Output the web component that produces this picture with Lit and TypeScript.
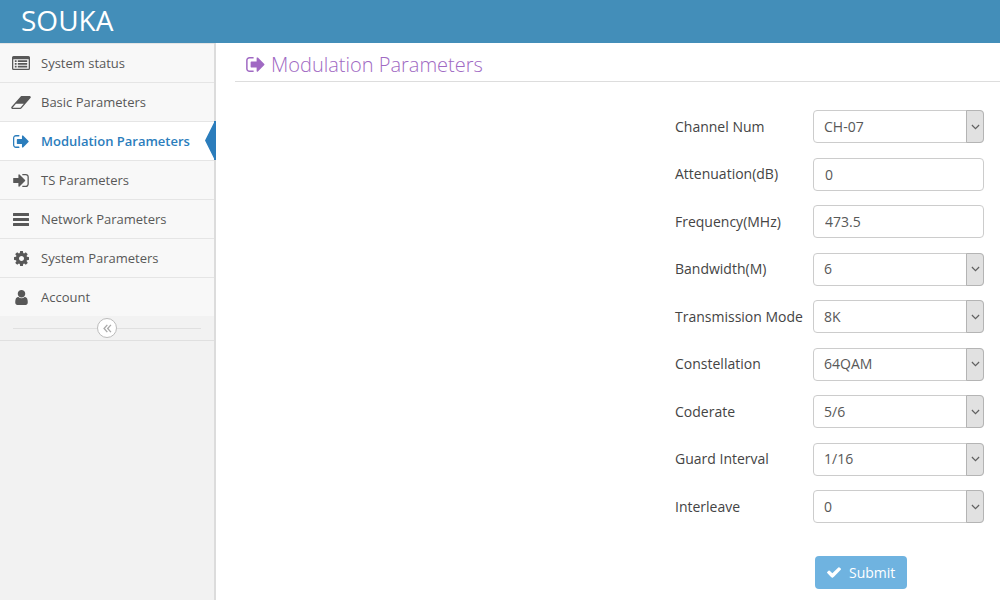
import { LitElement, html, css, svg, nothing } from "lit";
import { customElement, property, state } from "lit/decorators.js";

const glyphs: Record<string, { box: string; body: unknown }> = {
  list: {
    box: "0 0 18 14",
    body: svg`<path fill-rule="evenodd" d="M1.500 0h15A1.500 1.500 0 0 1 18 1.500v11A1.500 1.500 0 0 1 16.500 14h-15A1.500 1.500 0 0 1 0 12.500v-11A1.500 1.500 0 0 1 1.500 0zM1.300 3.200v9.500h15.400V3.200zM2.800 4.200h1.800v1.700H2.800zM5.800 4.200h9.400v1.700H5.800zM2.800 7h1.800v1.700H2.800zM5.800 7h9.400v1.700H5.800zM2.800 9.800h1.800v1.700H2.800zM5.800 9.800h9.400v1.700H5.800z"/>`,
  },
  eraser: {
    box: "-66 260 1922 1276",
    body: svg`<path d="M832 1408l336-384h-768l-336 384h768zm1013-1077q15 34 9.500 71.500t-30.500 65.500l-896 1024q-38 44-96 44h-768q-38 0-69.500-20.500t-47.500-54.500q-15-34-9.500-71.500t30.500-65.500l896-1024q38-44 96-44h768q38 0 69.500 20.500t47.500 54.500z"/>`,
  },
  signOut: {
    box: "64 256 1600 1280",
    body: svg`<path d="M704 1440q0 4 1 20t.5 26.500-3 23.500-10 19.500-20.500 6.500h-320q-119 0-203.500-84.500t-84.500-203.500v-704q0-119 84.500-203.500t203.500-84.500h320q13 0 22.500 9.500t9.500 22.500q0 4 1 20t.5 26.500-3 23.500-10 19.500-20.500 6.500h-320q-66 0-113 47t-47 113v704q0 66 47 113t113 47h312l11.500 1 11.500 3 8 5.500 7 9 2 13.500zm928-544q0 26-19 45l-544 544q-19 19-45 19t-45-19-19-45v-288h-448q-26 0-45-19t-19-45v-384q0-26 19-45t45-19h448v-288q0-26 19-45t45-19 45 19l544 544q19 19 19 45z"/>`,
  },
  signIn: {
    box: "0 256 1536 1280",
    body: svg`<path d="M1184 896q0 26-19 45l-544 544q-19 19-45 19t-45-19-19-45v-288h-448q-26 0-45-19t-19-45v-384q0-26 19-45t45-19h448v-288q0-26 19-45t45-19 45 19l544 544q19 19 19 45zm352-352v704q0 119-84.500 203.500t-203.500 84.500h-320q-13 0-22.500-9.500t-9.500-22.500q0-4-1-20t-.5-26.500 3-23.500 10-19.500 20.500-6.500h320q66 0 113-47t47-113v-704q0-66-47-113t-113-47h-312l-11.500-1-11.500-3-8-5.500-7-9-2-13.500q0-4-1-20t-.5-26.500 3-23.500 10-19.500 20.500-6.500h320q119 0 203.500 84.500t84.500 203.500z"/>`,
  },
  bars: {
    box: "0 0 16 13",
    body: svg`<path d="M.5 0h15a.5.5 0 0 1 .5.5v2a.5.5 0 0 1-.5.5H.5A.5.5 0 0 1 0 2.500v-2A.5.5 0 0 1 .5 0zM.5 5h15a.5.5 0 0 1 .5.5v2a.5.5 0 0 1-.5.5H.5a.5.5 0 0 1-.5-.5v-2A.5.5 0 0 1 .5 5zM.5 10h15a.5.5 0 0 1 .5.5v2a.5.5 0 0 1-.5.5H.5a.5.5 0 0 1-.5-.5v-2a.5.5 0 0 1 .5-.5z"/>`,
  },
  cog: {
    box: "128 128 1536 1536",
    body: svg`<path d="M1152 896q0-106-75-181t-181-75-181 75-75 181 75 181 181 75 181-75 75-181zm512-109v222q0 12-8 23t-20 13l-185 28q-19 54-39 91 35 50 107 138 10 12 10 25t-9 23q-27 37-99 108t-94 71q-12 0-26-9l-138-108q-44 23-91 38-16 136-29 186-7 28-36 28h-222q-14 0-24.500-8.500t-11.500-21.500l-28-184q-49-16-90-37l-141 107q-10 9-25 9-14 0-25-11-126-114-165-168-7-10-7-23 0-12 8-23 15-21 51-66.500t54-70.500q-27-50-41-99l-183-27q-13-2-21-12.500t-8-23.500v-222q0-12 8-23t19-13l186-28q14-46 39-92-40-57-107-138-10-12-10-24 0-10 9-23 26-36 98.500-107.500t94.500-71.500q13 0 26 10l138 107q44-23 91-38 16-136 29-186 7-28 36-28h222q14 0 24.500 8.500t11.500 21.500l28 184q49 16 90 37l142-107q9-9 24-9 13 0 25 10 129 119 165 170 7 8 7 22 0 12-8 23-15 21-51 66.500t-54 70.500q26 50 41 98l183 28q13 2 21 12.500t8 23.500z"/>`,
  },
  user: {
    box: "256 128 1280 1536",
    body: svg`<path d="M1536 1399q0 109-62.500 187t-150.500 78h-854q-88 0-150.500-78t-62.500-187q0-85 8.500-160.500t31.500-152 58.500-131 94-89 134.500-34.500q131 128 313 128t313-128q76 0 134.500 34.500t94 89 58.500 131 31.500 152 8.500 160.500zm-256-887q0 159-112.500 271.500t-271.500 112.500-271.500-112.500-112.500-271.500 112.500-271.500 271.500-112.500 271.500 112.500 112.500 271.500z"/>`,
  },
  check: {
    box: "121 334 1550 1188",
    body: svg`<path d="M1671 566q0 40-28 68l-724 724-136 136q-28 28-68 28t-68-28l-136-136-362-362q-28-28-28-68t28-68l136-136q28-28 68-28t68 28l294 295 656-657q28-28 68-28t68 28l136 136q28 28 28 68z"/>`,
  },
  chevrons: {
    box: "0 0 10 10",
    body: svg`<path d="M4.800 1L1.200 5l3.600 4M8.800 1L5.200 5l3.600 4" fill="none" stroke="currentColor" stroke-width="1.500"/>`,
  },
  down: {
    box: "0 0 10 6",
    body: svg`<path d="M1 .8l4 4 4-4" fill="none" stroke="currentColor" stroke-width="1.300"/>`,
  },
};

@customElement("ui-icon")
export class UiIcon extends LitElement {
  @property() name = "";

  static styles = css`
    :host {
      display: inline-flex;
      flex: none;
    }
    .glyph {
      width: 100%;
      height: 100%;
      fill: currentColor;
    }
  `;

  render() {
    const g = glyphs[this.name];
    return g
      ? html`<svg class="glyph" viewBox=${g.box} aria-hidden="true">${g.body}</svg>`
      : nothing;
  }
}

interface Field {
  id: string;
  label: string;
  value: string;
  options?: string[];
}

const menu = [
  { icon: "list", label: "System status" },
  { icon: "eraser", label: "Basic Parameters" },
  { icon: "signOut", label: "Modulation Parameters" },
  { icon: "signIn", label: "TS Parameters" },
  { icon: "bars", label: "Network Parameters" },
  { icon: "cog", label: "System Parameters" },
  { icon: "user", label: "Account" },
];

const fields: Field[] = [
  { id: "channel", label: "Channel Num", value: "CH-07", options: ["CH-07"] },
  { id: "attenuation", label: "Attenuation(dB)", value: "0" },
  { id: "frequency", label: "Frequency(MHz)", value: "473.5" },
  { id: "bandwidth", label: "Bandwidth(M)", value: "6", options: ["6"] },
  { id: "mode", label: "Transmission Mode", value: "8K", options: ["8K"] },
  { id: "constellation", label: "Constellation", value: "64QAM", options: ["64QAM"] },
  { id: "coderate", label: "Coderate", value: "5/6", options: ["5/6"] },
  { id: "guard", label: "Guard Interval", value: "1/16", options: ["1/16"] },
  { id: "interleave", label: "Interleave", value: "0", options: ["0"] },
];

@customElement("app-root")
export class AppRoot extends LitElement {
  @state() private active = "Modulation Parameters";

  static styles = css`
    :host {
      display: flex;
      flex-direction: column;
      min-height: 100vh;
      background: #fff;
      color: #444;
      font-family: "Open Sans", "Noto Sans", sans-serif;
      font-size: 14px;
      line-height: 20px;
    }
    * {
      box-sizing: border-box;
    }
    .header {
      display: flex;
      align-items: center;
      height: 43px;
      padding: 0 21px;
      background: #438eb9;
    }
    .brand {
      color: #fff;
      font-size: 28px;
      line-height: 41px;
      padding-bottom: 2px;
      text-decoration: none;
    }
    .body {
      display: flex;
      flex: 1;
    }
    .sidebar {
      flex: none;
      width: 216px;
      background: #f2f2f2;
      border-right: 2px solid #dcdcdc;
    }
    .menu {
      list-style: none;
      margin: 0;
      padding: 0;
    }
    .entry {
      border-top: 1px solid #e5e5e5;
    }
    .link {
      position: relative;
      display: flex;
      align-items: center;
      gap: 8px;
      height: 38px;
      padding: 0 8px;
      background: #f8f8f8;
      color: #585858;
      font-size: 13px;
      text-decoration: none;
    }
    .slot {
      display: flex;
      justify-content: center;
      width: 26px;
      margin-right: -1px;
    }
    .list {
      width: 18px;
      height: 14px;
    }
    .eraser {
      width: 20px;
      height: 13px;
    }
    .signOut,
    .signIn,
    .bars {
      width: 16px;
      height: 13px;
    }
    .cog,
    .user {
      width: 15px;
      height: 15px;
    }
    .current {
      background: #fff;
      color: #2b7dbc;
      font-weight: 600;
    }
    .current::after {
      content: "";
      position: absolute;
      top: -1px;
      right: -2px;
      width: 11px;
      height: 39px;
      background: #2b7dbc;
      clip-path: polygon(0 50%, 82% 4%, 82% 0, 100% 0, 100% 100%, 82% 100%, 82% 96%);
    }
    .collapse {
      display: flex;
      align-items: center;
      height: 25px;
      padding: 0 13px;
      border-bottom: 1px solid #e0e0e0;
    }
    .rule {
      flex: 1;
      height: 1px;
      background: #e0e0e0;
    }
    .toggle {
      display: flex;
      align-items: center;
      justify-content: center;
      width: 20px;
      height: 20px;
      padding: 0;
      border: 1px solid #bbb;
      border-radius: 50%;
      background: #fff;
      color: #aaa;
    }
    .chevrons {
      width: 9px;
      height: 9px;
    }
    .main {
      flex: 1;
      min-width: 0;
      padding: 0 0 11px 19px;
    }
    .title {
      display: flex;
      align-items: center;
      gap: 6px;
      margin: 0;
      padding: 8px 11px 3px;
      border-bottom: 1px solid #ddd;
      color: #a069c3;
      font-size: 20px;
      font-weight: 300;
      line-height: 27px;
    }
    .title-icon {
      width: 19px;
      height: 15px;
    }
    .form {
      display: flex;
      flex-direction: column;
      align-items: flex-end;
      gap: 33px;
      padding: 28px 16px 0 0;
    }
    .fields {
      display: flex;
      flex-direction: column;
      justify-content: space-between;
      min-height: 413px;
    }
    .row {
      display: grid;
      grid-template-columns: 138px 171px;
      align-items: center;
    }
    .box {
      position: relative;
      display: flex;
    }
    .control {
      width: 100%;
      height: 33px;
      margin: 0;
      padding: 0 11px;
      border: 1px solid #ccc;
      border-radius: 4px;
      background: #fff;
      color: #585858;
      font: inherit;
      appearance: none;
    }
    .pick {
      padding: 0 26px 0 10px;
    }
    .arrow {
      position: absolute;
      top: 0;
      right: 0;
      bottom: 0;
      display: flex;
      align-items: center;
      justify-content: center;
      width: 18px;
      border: 1px solid #b4b4b4;
      border-radius: 0 4px 4px 0;
      background: #e1e1e1;
      color: #606060;
      pointer-events: none;
    }
    .down {
      width: 9px;
      height: 6px;
    }
    .actions {
      display: flex;
      width: 169px;
    }
    .submit {
      display: flex;
      align-items: center;
      gap: 8px;
      height: 33px;
      padding: 0 12px;
      border: 0;
      border-radius: 4px;
      background: #6fb3e0;
      color: #fff;
      font: inherit;
    }
    .check {
      width: 14px;
      height: 11px;
    }
  `;

  private field(f: Field) {
    return html`<div class="row">
      <label for=${f.id}>${f.label}</label>
      <div class="box">
        ${f.options
          ? html`<select class="control pick" id=${f.id}>
                ${f.options.map((o) => html`<option ?selected=${o === f.value}>${o}</option>`)}
              </select>
              <span class="arrow"><ui-icon class="down" name="down"></ui-icon></span>`
          : html`<input class="control" id=${f.id} type="text" .value=${f.value} />`}
      </div>
    </div>`;
  }

  render() {
    return html`
      <header class="header"><a class="brand" href="#">SOUKA</a></header>
      <div class="body">
        <nav class="sidebar">
          <ul class="menu">
            ${menu.map(
              (m) => html`<li class="entry">
                <a
                  class="link ${m.label === this.active ? "current" : ""}"
                  href="#"
                  @click=${() => (this.active = m.label)}
                >
                  <span class="slot"><ui-icon class=${m.icon} name=${m.icon}></ui-icon></span>
                  <span>${m.label}</span>
                </a>
              </li>`
            )}
          </ul>
          <div class="collapse">
            <span class="rule"></span>
            <button class="toggle" type="button" aria-label="Collapse menu">
              <ui-icon class="chevrons" name="chevrons"></ui-icon>
            </button>
            <span class="rule"></span>
          </div>
        </nav>
        <main class="main">
          <h1 class="title">
            <ui-icon class="title-icon" name="signOut"></ui-icon>
            <span>${this.active}</span>
          </h1>
          <form class="form" @submit=${(e: Event) => e.preventDefault()}>
            <div class="fields">${fields.map((f) => this.field(f))}</div>
            <div class="actions">
              <button class="submit" type="submit">
                <ui-icon class="check" name="check"></ui-icon>
                <span>Submit</span>
              </button>
            </div>
          </form>
        </main>
      </div>
    `;
  }
}
